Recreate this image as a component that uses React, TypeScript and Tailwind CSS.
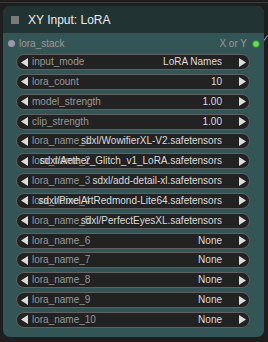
import React from "react";

const font = { fontFamily: '"Liberation Sans", Arial, sans-serif' };

const widgets: { label: string; value: string }[] = [
  { label: "input_mode", value: "LoRA Names" },
  { label: "lora_count", value: "10" },
  { label: "model_strength", value: "1.00" },
  { label: "clip_strength", value: "1.00" },
  { label: "lora_name_1", value: "sdxl/WowifierXL-V2.safetensors" },
  { label: "lora_name_2", value: "sdxl/Aether_Glitch_v1_LoRA.safetensors" },
  { label: "lora_name_3", value: "sdxl/add-detail-xl.safetensors" },
  { label: "lora_name_4", value: "sdxl/PixelArtRedmond-Lite64.safetensors" },
  { label: "lora_name_5", value: "sdxl/PerfectEyesXL.safetensors" },
  { label: "lora_name_6", value: "None" },
  { label: "lora_name_7", value: "None" },
  { label: "lora_name_8", value: "None" },
  { label: "lora_name_9", value: "None" },
  { label: "lora_name_10", value: "None" },
];

function Arrow({ dir }: { dir: "left" | "right" }) {
  return (
    <svg width="7" height="9" viewBox="0 0 7 9" className="shrink-0">
      {dir === "left" ? (
        <path d="M7 0 L0 4.5 L7 9 Z" fill="#dddddd" />
      ) : (
        <path d="M0 0 L7 4.5 L0 9 Z" fill="#dddddd" />
      )}
    </svg>
  );
}

function Widget({ label, value }: { label: string; value: string }) {
  return (
    <div className="flex items-center h-[16px] rounded-full bg-[#222222] border border-[#606060] pl-[4px] pr-[3px]">
      <Arrow dir="left" />
      <div className="grid grid-cols-[minmax(0,1fr)] flex-1 min-w-0 ml-[4px] mr-[17px] text-[10px] leading-none">
        <span className="col-start-1 row-start-1 whitespace-nowrap text-[#999999]">
          {label}
        </span>
        <div className="col-start-1 row-start-1 flex justify-end min-w-0">
          <span className="shrink-0 whitespace-nowrap text-[#dddddd]">
            {value}
          </span>
        </div>
      </div>
      <Arrow dir="right" />
    </div>
  );
}

export default function App() {
  return (
    <div
      className="relative w-[268px] h-[342px] overflow-hidden bg-[#1e1e1e] pt-[6px] pl-[3px]"
      style={font}
    >
      <div className="absolute top-[2px] left-0 right-0 h-px bg-[#3a3a3a]" />
      <svg
        className="absolute top-[30px] left-[262px]"
        width="8"
        height="14"
        viewBox="0 0 8 14"
      >
        <path d="M0 13 C3 10 4 6 8 4" stroke="#9ec9c0" strokeWidth="1" fill="none" />
      </svg>

      <div className="relative w-[261px] rounded-[7px] overflow-hidden bg-[#335555]">
        <div className="flex items-center h-[27px] bg-[#223333] pl-[8px]">
          <div className="w-[8px] h-[8px] bg-[#7a7a7a]" />
          <span className="ml-[9px] text-[12px] text-[#ececec] leading-none">
            XY Input: LoRA
          </span>
        </div>

        <div className="flex items-center justify-between h-[21px] pl-[5px] pr-[4px] text-[10px] text-[#9a9a9a]">
          <div className="flex items-center gap-[4px]">
            <div className="w-[7px] h-[7px] rounded-full bg-[#9a98a6]" />
            <span>lora_stack</span>
          </div>
          <div className="flex items-center gap-[5px]">
            <span>X or Y</span>
            <div className="w-[8px] h-[8px] rounded-full bg-[#66dd55] border border-[#2f7a2f]" />
          </div>
        </div>

        <div className="flex flex-col gap-[3.85px] pl-[13px] pr-[14px] pt-[0px] pb-[9px]">
          {widgets.map((w) => (
            <Widget key={w.label} label={w.label} value={w.value} />
          ))}
        </div>
      </div>
    </div>
  );
}
